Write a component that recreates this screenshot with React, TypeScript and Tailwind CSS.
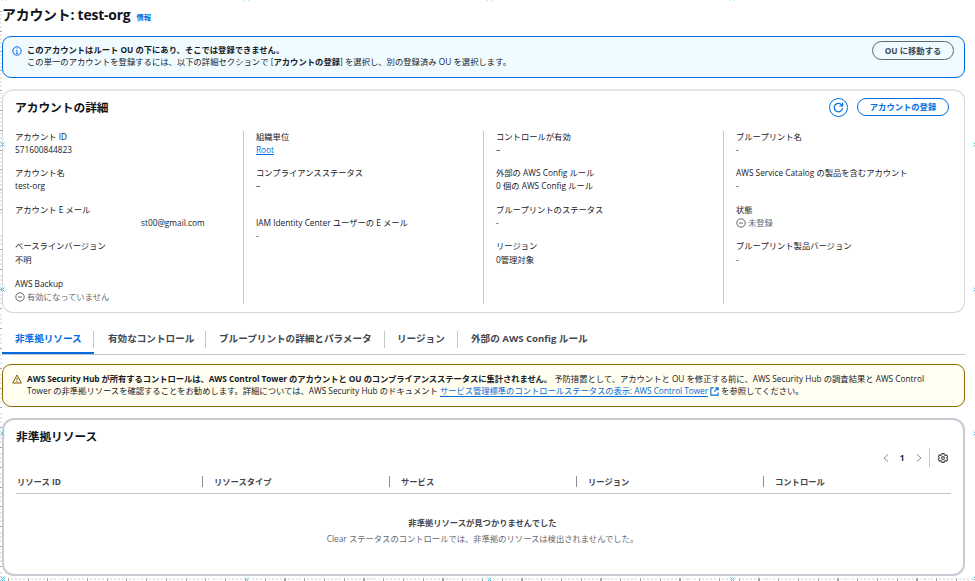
import React from 'react';

interface FieldProps {
  label: string;
  className?: string;
  children: React.ReactNode;
}

const Field: React.FC<FieldProps> = ({ label, className = 'h-[36.6px]', children }) => (
  <div className={className}>
    <div className="h-[13.4px]">{label}</div>
    <div className="h-[13px]">{children}</div>
  </div>
);

const MinusStatus: React.FC<{ text: string }> = ({ text }) => (
  <span className="flex items-center gap-[2px] text-[#656871]">
    <svg viewBox="0 0 10 11" className="h-[11px] w-[10px] shrink-0" fill="none" stroke="currentColor">
      <circle cx="5" cy="6" r="4.2" />
      <path d="M3 6h4" />
    </svg>
    {text}
  </span>
);

const CrossMark: React.FC = () => (
  <svg viewBox="0 0 5 5" className="h-[5px] w-[5px] shrink-0" stroke="#4dc3ec" strokeWidth="1">
    <path d="M0.5 0.5l4 4M4.5 0.5l-4 4" />
  </svg>
);

const marks = [0, 1, 2, 3];

// ruler strips and grid marks around the canvas edge
const Rulers: React.FC = () => (
  <div className="pointer-events-none absolute inset-0 overflow-hidden">
    <div className="absolute inset-y-0 left-0 flex w-[2px] flex-col">
      <div className="mt-[11px] h-[205px] bg-[repeating-linear-gradient(180deg,#a6a6a6_0_1px,#fff_1px_3px,#e8e8e8_3px_5px,#fff_5px_7px,#e8e8e8_7px_9px,#fff_9px_11px,#e8e8e8_11px_13px,#fff_13px_15px,#e8e8e8_15px_17px,#fff_17px_19.8px)]" />
      <div className="mt-[16px] flex-1 bg-[repeating-linear-gradient(180deg,#fff_0_3px,#e8e8e8_3px_5px,#fff_5px_7px,#e8e8e8_7px_9px,#fff_9px_11px,#e8e8e8_11px_13px,#fff_13px_17px,#a6a6a6_17px_18px,#fff_18px_19.8px)]" />
    </div>
    <div className="absolute bottom-0 left-[8px] right-0 flex h-[4px] flex-col">
      <div className="h-[1px]" />
      <div className="h-[2px] bg-[repeating-linear-gradient(90deg,#a6a6a6_0_1px,#fff_1px_3px,#e8e8e8_3px_5px,#fff_5px_7px,#e8e8e8_7px_9px,#fff_9px_11px,#e8e8e8_11px_13px,#fff_13px_15px,#e8e8e8_15px_17px,#fff_17px_19.75px)]" />
      <div className="h-[1px] bg-[repeating-linear-gradient(90deg,#a6a6a6_0_1px,#fff_1px_19.75px)]" />
    </div>
    <div className="absolute inset-y-0 left-0 flex flex-col gap-[139.7px] pt-[142px]">
      {marks.map((m) => <CrossMark key={m} />)}
    </div>
    <div className="absolute inset-y-0 -right-[3px] flex flex-col gap-[139.7px] pt-[142px]">
      {marks.map((m) => <CrossMark key={m} />)}
    </div>
    <div className="absolute -top-[4px] flex gap-[238px] pl-[1px]">
      {marks.map((m) => <CrossMark key={m} />)}
    </div>
    <div className="absolute -bottom-px flex gap-[238px] pl-[1px]">
      {marks.map((m) => <CrossMark key={m} />)}
    </div>
  </div>
);

const tabs = [
  { label: '非準拠リソース', className: 'pl-[13px] w-[92px]' },
  { label: '有効なコントロール', className: 'pl-[14px] w-[112px]' },
  { label: 'ブループリントの詳細とパラメータ', className: 'pl-[13px] w-[179px]' },
  { label: 'リージョン', className: 'pl-[12px] w-[73px]' },
  { label: '外部の AWS Config ルール', className: 'pl-[13px] w-[140px]' },
];

const columns = ['リソース ID', 'リソースタイプ', 'サービス', 'リージョン', 'コントロール'];

const App: React.FC = () => {
  return (
    <div className="relative h-[581px] w-[975px] overflow-hidden whitespace-nowrap bg-white font-['Open_Sans','Noto_Sans_CJK_JP',sans-serif] text-[8.3px] leading-[13px] text-[#16191f]">
      <Rulers />
      <div className="ml-[2px] w-[963px]">
        <header className="flex h-[36px] items-start gap-[6px] pt-[5px]">
          <h1 className="text-[13.9px] font-bold leading-[20px] tracking-[-0.2px] text-[#0f141a]">アカウント: test-org</h1>
          <a className="pt-[6px] text-[7.3px] font-bold leading-[12px] text-[#006ce0]">情報</a>
        </header>

        <section className="flex h-[42px] items-start gap-[5px] rounded-[9px] border border-[#006ce0] bg-[#f0fbff] pl-[9px] pr-[10px]">
          <svg viewBox="0 0 10 10" className="mt-[9px] h-[10px] w-[10px]" fill="none" stroke="#006ce0">
            <circle cx="5" cy="5" r="4.2" />
            <path d="M5 4.5v3M4 4.5h1M4 7.3h2M5 2.3v1" strokeWidth="0.8" />
          </svg>
          <div className="flex-1 pt-[7px] leading-[12px]">
            <div className="font-bold">このアカウントはルート OU の下にあり、そこでは登録できません。</div>
            <div className="tracking-[0.03px]">
              この単一のアカウントを登録するには、以下の詳細セクションで [<b>アカウントの登録</b>] を選択し、別の登録済み OU を選択します。
            </div>
          </div>
          <button className="mt-[4px] h-[19px] w-[82px] rounded-full border border-[#656871] font-bold leading-[16px] text-[#424650]">
            OU に移動する
          </button>
        </section>

        <section className="mt-[11px] h-[224px] rounded-[11px] border border-t-2 border-[#d5d7dd] border-t-[#e5e5e8]">
          <div className="flex h-[40px] items-start gap-[9px] pl-[12px] pr-[15px] pt-[7px]">
            <h2 className="flex-1 text-[11.7px] font-bold leading-[18px] text-[#0f141a]">アカウントの詳細</h2>
            <button className="flex h-[19px] w-[19px] items-center justify-center rounded-full border border-[#006ce0]">
              <svg viewBox="0 0 11 11" className="h-[11px] w-[11px]" fill="none" stroke="#006ce0" strokeWidth="1.2">
                <path d="M9.6 6.2A4.2 4.2 0 1 1 8.6 2.8L9.4 3.6M9.6 0.8v3.2H6.4" />
              </svg>
            </button>
            <button className="h-[18px] w-[92px] rounded-full border border-[#006ce0] font-bold leading-[14px] text-[#006ce0]">
              アカウントの登録
            </button>
          </div>
          <div className="grid h-[173px] grid-cols-[241px_240px_240px_1fr] divide-x divide-[#c6c6cd]">
            <div className="pl-[12px]">
              <div className="-mt-[1.5px]">
                <Field label="アカウント ID">571600844823</Field>
                <Field label="アカウント名">test-org</Field>
                <Field label="アカウント E メール">
                  <span className="pl-[126px]">st00@gmail.com</span>
                </Field>
                <Field label="ベースラインバージョン" className="h-[37.6px]">不明</Field>
                <Field label="AWS Backup" className="h-[25px]">
                  <MinusStatus text="有効になっていません" />
                </Field>
              </div>
            </div>
            <div className="pl-[12px]">
              <div className="-mt-[1.5px]">
                <Field label="組織単位">
                  <a className="inline-block h-[12px] border-b border-[#006ce0] leading-[13px] text-[#006ce0]">Root</a>
                </Field>
                <Field label="コンプライアンスステータス" className="h-[50px]">–</Field>
                <Field label="IAM Identity Center ユーザーの E メール">-</Field>
              </div>
            </div>
            <div className="pl-[12px]">
              <div className="-mt-[1.5px]">
                <Field label="コントロールが有効">–</Field>
                <Field label="外部の AWS Config ルール">0 個の AWS Config ルール</Field>
                <Field label="ブループリントのステータス">-</Field>
                <Field label="リージョン">0管理対象</Field>
              </div>
            </div>
            <div className="pl-[12px]">
              <div className="-mt-[1.5px]">
                <Field label="ブループリント名">-</Field>
                <Field label="AWS Service Catalog の製品を含むアカウント">-</Field>
                <Field label="状態">
                  <MinusStatus text="未登録" />
                </Field>
                <Field label="ブループリント製品バージョン">-</Field>
              </div>
            </div>
          </div>
        </section>

        <nav className="mt-[13px] flex h-[29px] border-b border-[#c6c6cd] text-[9.6px] font-bold text-[#424650]">
          {tabs.map((tab, i) => (
            <div
              key={tab.label}
              className={`flex h-[28px] shrink-0 items-start justify-between ${tab.className} ${
                i === 0 ? 'border-b-2 border-[#006ce0] text-[#006ce0]' : ''
              }`}
            >
              <span className="pt-[6px]">{tab.label}</span>
              {i < tabs.length - 1 && <i className="mt-[5px] h-[17px] w-px bg-[#c6c6cd]" />}
            </div>
          ))}
        </nav>

        <section className="mt-[9px] flex h-[43px] items-start gap-[5px] rounded-[9px] border border-[#906806] bg-[#fffef0] pl-[9px]">
          <svg viewBox="0 0 10 10" className="mt-[9px] h-[10px] w-[10px]" fill="none" stroke="#855900">
            <path d="M5 1L9.3 9H0.7z" strokeLinejoin="round" />
            <path d="M5 3.8v2.5M5 7v1" />
          </svg>
          <div className="pt-[8px] leading-[12px]">
            <div>
              <b className="tracking-[-0.06px]">AWS Security Hub が所有するコントロールは、AWS Control Tower のアカウントと OU のコンプライアンスステータスに集計されません。</b>{' '}
              予防措置として、アカウントと OU を修正する前に、AWS Security Hub の調査結果と AWS Control
            </div>
            <div>
              Tower の非準拠リソースを確認することをお勧めします。詳細については、AWS Security Hub のドキュメント{' '}
              <a className="inline-block h-[12px] border-b border-[#006ce0] tracking-[-0.04px] text-[#006ce0]">
                サービス管理標準のコントロールステータスの表示: AWS Control Tower
              </a>
              <svg viewBox="0 0 10 10" className="mx-[2px] inline-block h-[9px] w-[9px]" fill="none" stroke="#006ce0" strokeWidth="1.2">
                <path d="M4 1H1v8h8V6M6 1h3v3M9 1L4.8 5.2" />
              </svg>
              を参照してください。
            </div>
          </div>
        </section>

        <section className="mt-[11px] h-[158px] rounded-[12px] border-2 border-[#c9cad2] px-[12px]">
          <h2 className="pt-[7px] text-[11.7px] font-bold leading-[18px] text-[#0f141a]">非準拠リソース</h2>
          <div className="mt-[3px] flex h-[19px] items-center justify-end pr-[3px] text-[#8c8c94]">
            <svg viewBox="0 0 6 8" className="h-[8px] w-[6px]" fill="none" stroke="currentColor">
              <path d="M5 0.5L1 4l4 3.5" />
            </svg>
            <span className="w-[27px] pr-[1px] text-center font-bold text-[#002b66]">1</span>
            <svg viewBox="0 0 6 8" className="h-[8px] w-[6px]" fill="none" stroke="currentColor">
              <path d="M1 0.5L5 4 1 7.5" />
            </svg>
            <span className="ml-[7px] h-[19px] w-px bg-[#c6c6cd]" />
            <svg viewBox="0 0 10 10" className="ml-[8px] h-[10px] w-[10px]" fill="none" stroke="#424650" strokeWidth="1.1">
              <path d="M4 0.6h2l.4 1.2 1 .6 1.3-.4 1 1.7-.9 1v.6l.9 1-1 1.7-1.3-.4-1 .6L6 9.4H4l-.4-1.2-1-.6-1.3.4-1-1.7.9-1v-.6l-.9-1 1-1.7 1.3.4 1-.6z" />
              <circle cx="5" cy="5" r="1.4" />
            </svg>
          </div>
          <div className="grid h-[27px] grid-cols-[186px_187px_187px_187px_1fr] border-b border-[#c6c6cd] pt-[8px] font-bold text-[#424650]">
            {columns.map((column, i) => (
              <div key={column} className={`flex h-[13px] items-center gap-[11px] ${i === 0 ? 'pl-px' : ''}`}>
                {i > 0 && <i className="h-[11px] w-px bg-[#8c8c94]" />}
                {column}
              </div>
            ))}
          </div>
          <div className="flex flex-col items-center gap-[3px] pr-[2px] pt-[22px] text-[#656871]">
            <div className="font-bold text-[#424650]">非準拠リソースが見つかりませんでした</div>
            <div>Clear ステータスのコントロールでは、非準拠のリソースは検出されませんでした。</div>
          </div>
        </section>
      </div>
    </div>
  );
};

export default App;
